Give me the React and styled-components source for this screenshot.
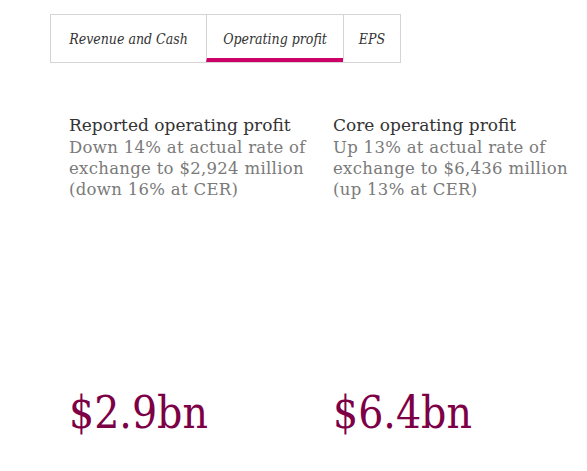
import styled, { createGlobalStyle } from "styled-components";

const GlobalStyle = createGlobalStyle`
  body {
    margin: 0;
    background: #fff;
    font-family: "DejaVu Serif", serif;
  }
`;

const Page = styled.div`
  padding: 14px 0 0 50px;
`;

const TabBar = styled.div`
  display: inline-flex;
  border: 1px solid #d4d4d4;
`;

const Tab = styled.div`
  box-sizing: border-box;
  width: ${(p) => p.w}px;
  height: 47px;
  display: flex;
  align-items: center;
  justify-content: center;
  font-family: "DejaVu Serif Condensed", "DejaVu Serif", serif;
  font-style: italic;
  font-size: 14px;
  color: #333;
  border-left: ${(p) => (p.first ? "none" : "1px solid #d4d4d4")};
  border-bottom: 4px solid ${(p) => (p.active ? "#cc0066" : "transparent")};
  padding-top: 4px;
`;

const Stats = styled.div`
  display: grid;
  grid-template-columns: 264px 264px;
  padding: 50px 0 0 19px;
`;

const Stat = styled.div`
  display: flex;
  flex-direction: column;
`;

const Heading = styled.div`
  font-size: 17px;
  line-height: 24px;
  color: #333;
`;

const Desc = styled.div`
  font-size: 16.5px;
  line-height: 21px;
  letter-spacing: 0.3px;
  color: #7a7a7a;
  height: 251px;
`;

const Value = styled.div`
  font-family: "DejaVu Serif Condensed", "DejaVu Serif", serif;
  font-size: 44px;
  line-height: 50px;
  color: #7d0046;
`;

const stats = [
  {
    title: "Reported operating profit",
    desc: "Down 14% at actual rate of exchange to $2,924 million (down 16% at CER)",
    value: "$2.9bn",
  },
  {
    title: "Core operating profit",
    desc: "Up 13% at actual rate of exchange to $6,436 million (up 13% at CER)",
    value: "$6.4bn",
  },
];

export default function App() {
  return (
    <Page>
      <GlobalStyle />
      <TabBar>
        <Tab w={155} first>Revenue and Cash</Tab>
        <Tab w={137} active>Operating profit</Tab>
        <Tab w={57}>EPS</Tab>
      </TabBar>
      <Stats>
        {stats.map((s) => (
          <Stat key={s.title}>
            <Heading>{s.title}</Heading>
            <Desc>{s.desc}</Desc>
            <Value>{s.value}</Value>
          </Stat>
        ))}
      </Stats>
    </Page>
  );
}
